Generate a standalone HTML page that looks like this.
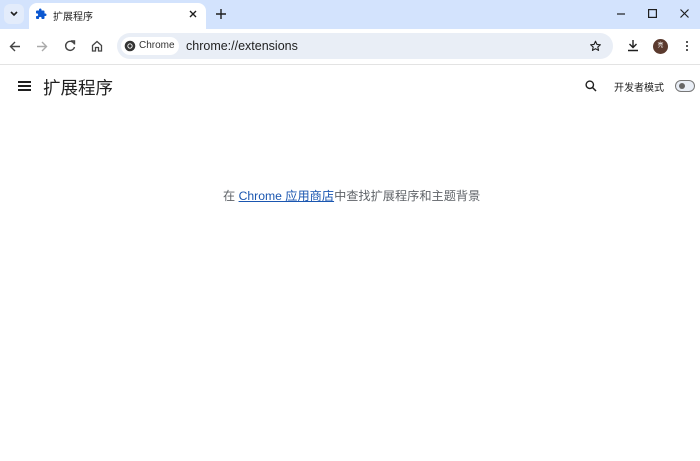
<!DOCTYPE html>
<html><head><meta charset="utf-8"><style>
*{margin:0;padding:0;box-sizing:border-box}
body{width:700px;height:461px;overflow:hidden;background:#fff;font-family:"Liberation Sans","Noto Sans CJK SC",sans-serif;position:relative;color:#1f1f1f}
.abs{position:absolute}
svg{position:absolute;overflow:visible}
</style></head><body>
<div class="abs" style="left:0;top:0;width:700px;height:29px;background:#d3e3fd"></div>
<div class="abs" style="left:4px;top:4px;width:20px;height:20px;border-radius:6px;background:#e3ecfb"></div>
<svg style="left:10px;top:11px" width="8" height="6"><path d="M1 1L4 4L7 1" stroke="#1f1f1f" stroke-width="1.6" fill="none"/></svg>
<div class="abs" style="left:29px;top:3px;width:177px;height:27px;background:#fff;border-radius:8px 8px 0 0"></div>
<svg style="left:35px;top:8px" width="12" height="12" viewBox="0 0 24 24"><path fill="#0b57d0" d="M20.5 11H19V7c0-1.1-.9-2-2-2h-4V3.5a2.5 2.5 0 0 0-5 0V5H4c-1.1 0-2 .9-2 2v3.8h1.5a2.7 2.7 0 0 1 0 5.4H2V20c0 1.1.9 2 2 2h3.8v-1.5a2.7 2.7 0 0 1 5.4 0V22H17c1.1 0 2-.9 2-2v-4h1.5a2.5 2.5 0 0 0 0-5z"/></svg>
<div class="abs" style="left:53px;top:8px;font-size:10px;color:#1f1f1f">扩展程序</div>
<svg style="left:189px;top:10px" width="8" height="8"><path d="M1 1L7 7M7 1L1 7" stroke="#1f1f1f" stroke-width="1.4"/></svg>
<svg style="left:216px;top:9px" width="10" height="10"><path d="M5 0V10M0 5H10" stroke="#1f1f1f" stroke-width="1.4"/></svg>
<svg style="left:617px;top:13px" width="8" height="2"><path d="M0 1H8" stroke="#1f1f1f" stroke-width="1.2"/></svg>
<svg style="left:648px;top:9px" width="9" height="9"><rect x=".6" y=".6" width="7.8" height="7.8" stroke="#1f1f1f" stroke-width="1.2" fill="none"/></svg>
<svg style="left:680px;top:9px" width="9" height="9"><path d="M.5 .5L8.5 8.5M8.5 .5L.5 8.5" stroke="#1f1f1f" stroke-width="1.2"/></svg>
<svg style="left:9px;top:41px" width="12" height="11"><path d="M11 5.5H1.5M6 1L1.5 5.5L6 10" stroke="#444" stroke-width="1.4" fill="none"/></svg>
<svg style="left:36px;top:41px" width="12" height="11"><path d="M1 5.5H10.5M6 1L10.5 5.5L6 10" stroke="#aaa" stroke-width="1.4" fill="none"/></svg>
<svg style="left:64px;top:40px" width="12" height="12"><path d="M10 3.5A4.5 4.5 0 1 0 10.5 7" stroke="#444" stroke-width="1.4" fill="none"/><path d="M7 1H10.5V4.5" stroke="#444" stroke-width="1.4" fill="none"/></svg>
<svg style="left:91px;top:40px" width="12" height="12"><path d="M1.5 5.5L6 1.5L10.5 5.5V11H7.5V7.5H4.5V11H1.5Z" stroke="#444" stroke-width="1.3" fill="none"/></svg>
<div class="abs" style="left:117px;top:33px;width:496px;height:26px;border-radius:13px;background:#e9eef6"></div>
<div class="abs" style="left:121px;top:37px;width:58px;height:18px;border-radius:9px;background:#fff"></div>
<svg style="left:124px;top:40px" width="12" height="12" viewBox="0 0 12 12"><circle cx="6" cy="6" r="5.3" fill="#333"/><circle cx="6" cy="6" r="2.6" fill="#fff"/><circle cx="6" cy="6" r="1.7" fill="#333"/></svg>
<div class="abs" style="left:139px;top:40px;font-size:10px;color:#333">Chrome</div>
<div class="abs" style="left:186px;top:39px;font-size:12.5px;color:#1f1f1f">chrome://extensions</div>
<svg style="left:589px;top:40px" width="13" height="12" viewBox="0 0 24 24"><path d="M12 2.5l2.9 6.3 6.9.7-5.2 4.6 1.5 6.8L12 17.4 5.9 20.9l1.5-6.8L2.2 9.5l6.9-.7z" stroke="#1f1f1f" stroke-width="2.2" fill="none" stroke-linejoin="round"/></svg>
<svg style="left:627px;top:39px" width="12" height="13"><path d="M6 1V8.5M2.5 5L6 8.5L9.5 5M1 11.5H11" stroke="#1f1f1f" stroke-width="1.4" fill="none"/></svg>
<div class="abs" style="left:653px;top:39px;width:15px;height:15px;border-radius:50%;background:#5b3a2e;color:#fff;font-size:6px;text-align:center;line-height:15px">亮</div>
<div class="abs" style="left:686px;top:41px;width:2px;height:2px;background:#1f1f1f;border-radius:1px;box-shadow:0 4px 0 #1f1f1f,0 8px 0 #1f1f1f"></div>
<div class="abs" style="left:0;top:64px;width:700px;height:1px;background:#e3e3e3"></div>
<div class="abs" style="left:18px;top:81px;width:13px;height:2px;background:#1f1f1f;box-shadow:0 4px 0 #1f1f1f,0 8px 0 #1f1f1f"></div>
<div class="abs" style="left:43px;top:75px;font-size:17.5px;color:#1f1f1f">扩展程序</div>
<svg style="left:585px;top:80px" width="12" height="12"><circle cx="4.8" cy="4.8" r="3.7" stroke="#1f1f1f" stroke-width="1.4" fill="none"/><path d="M7.5 7.5L11 11" stroke="#1f1f1f" stroke-width="1.5"/></svg>
<div class="abs" style="left:614px;top:79px;font-size:10px;color:#1f1f1f">开发者模式</div>
<div class="abs" style="left:675px;top:80px;width:20px;height:12px;border-radius:6px;border:1px solid #777;background:#e9eef6"></div>
<div class="abs" style="left:679px;top:83px;width:6px;height:6px;border-radius:50%;background:#666"></div>
<div class="abs" style="left:223px;top:186px;font-size:12.2px;color:#5f6368;white-space:nowrap">在 <span style="color:#1a56b0;text-decoration:underline">Chrome 应用商店</span>中查找扩展程序和主题背景</div>
</body></html>
